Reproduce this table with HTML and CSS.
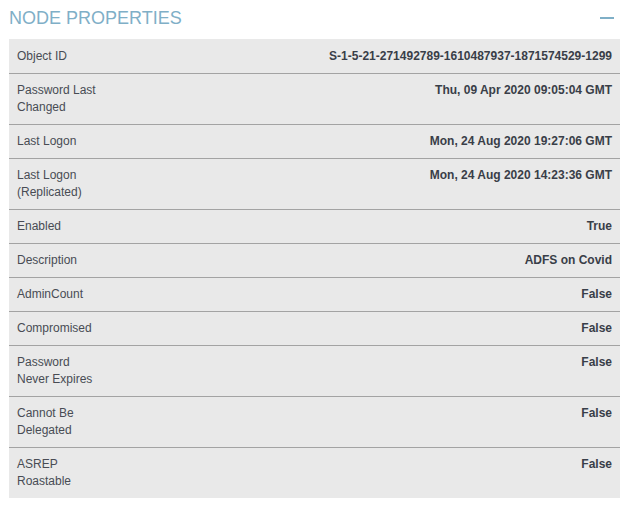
FILE: index.html
```html
<!DOCTYPE html>
<html>
<head>
<meta charset="utf-8">
<link rel="stylesheet" href="styles.css">
</head>
<body>
<div class="panel">
  <div class="header">
    <span class="title">NODE PROPERTIES</span>
    <span class="collapse"></span>
  </div>
  <table class="props">
    <tr><td class="label">Object ID</td><td class="value">S-1-5-21-271492789-1610487937-1871574529-1299</td></tr>
    <tr><td class="label">Password Last Changed</td><td class="value">Thu, 09 Apr 2020 09:05:04 GMT</td></tr>
    <tr><td class="label">Last Logon</td><td class="value">Mon, 24 Aug 2020 19:27:06 GMT</td></tr>
    <tr><td class="label">Last Logon (Replicated)</td><td class="value">Mon, 24 Aug 2020 14:23:36 GMT</td></tr>
    <tr><td class="label">Enabled</td><td class="value">True</td></tr>
    <tr><td class="label">Description</td><td class="value">ADFS on Covid</td></tr>
    <tr><td class="label">AdminCount</td><td class="value">False</td></tr>
    <tr><td class="label">Compromised</td><td class="value">False</td></tr>
    <tr><td class="label">Password Never Expires</td><td class="value">False</td></tr>
    <tr><td class="label">Cannot Be Delegated</td><td class="value">False</td></tr>
    <tr><td class="label">ASREP Roastable</td><td class="value">False</td></tr>
  </table>
</div>
</body>
</html>
```
FILE: styles.css
```css
html, body {
  margin: 0;
  padding: 0;
  background: #fff;
}
body {
  font-family: "Liberation Sans", Arial, sans-serif;
}
.panel {
  padding: 0 8px 0 9px;
}
.header {
  display: flex;
  align-items: center;
  justify-content: space-between;
  height: 39px;
}
.title {
  font-size: 18px;
  color: #7fafc7;
  line-height: 20px;
  padding-bottom: 3px;
}
.collapse {
  width: 14px;
  height: 2px;
  background: #7fafc7;
  margin-right: 6px;
  margin-bottom: 4px;
}
.props {
  width: 100%;
  border-collapse: collapse;
  background: #e9e9e9;
  font-size: 12px;
  line-height: 17px;
}
.props tr {
  border-bottom: 1px solid #a3a3a3;
}
.props tr:first-child td {
  padding-top: 9px;
}
.props tr:last-child {
  border-bottom: none;
}
.props td {
  padding: 8px;
  vertical-align: top;
}
.label {
  width: 82px;
  color: #484c54;
}
.value {
  text-align: right;
  font-weight: bold;
  color: #393e48;
}
```
